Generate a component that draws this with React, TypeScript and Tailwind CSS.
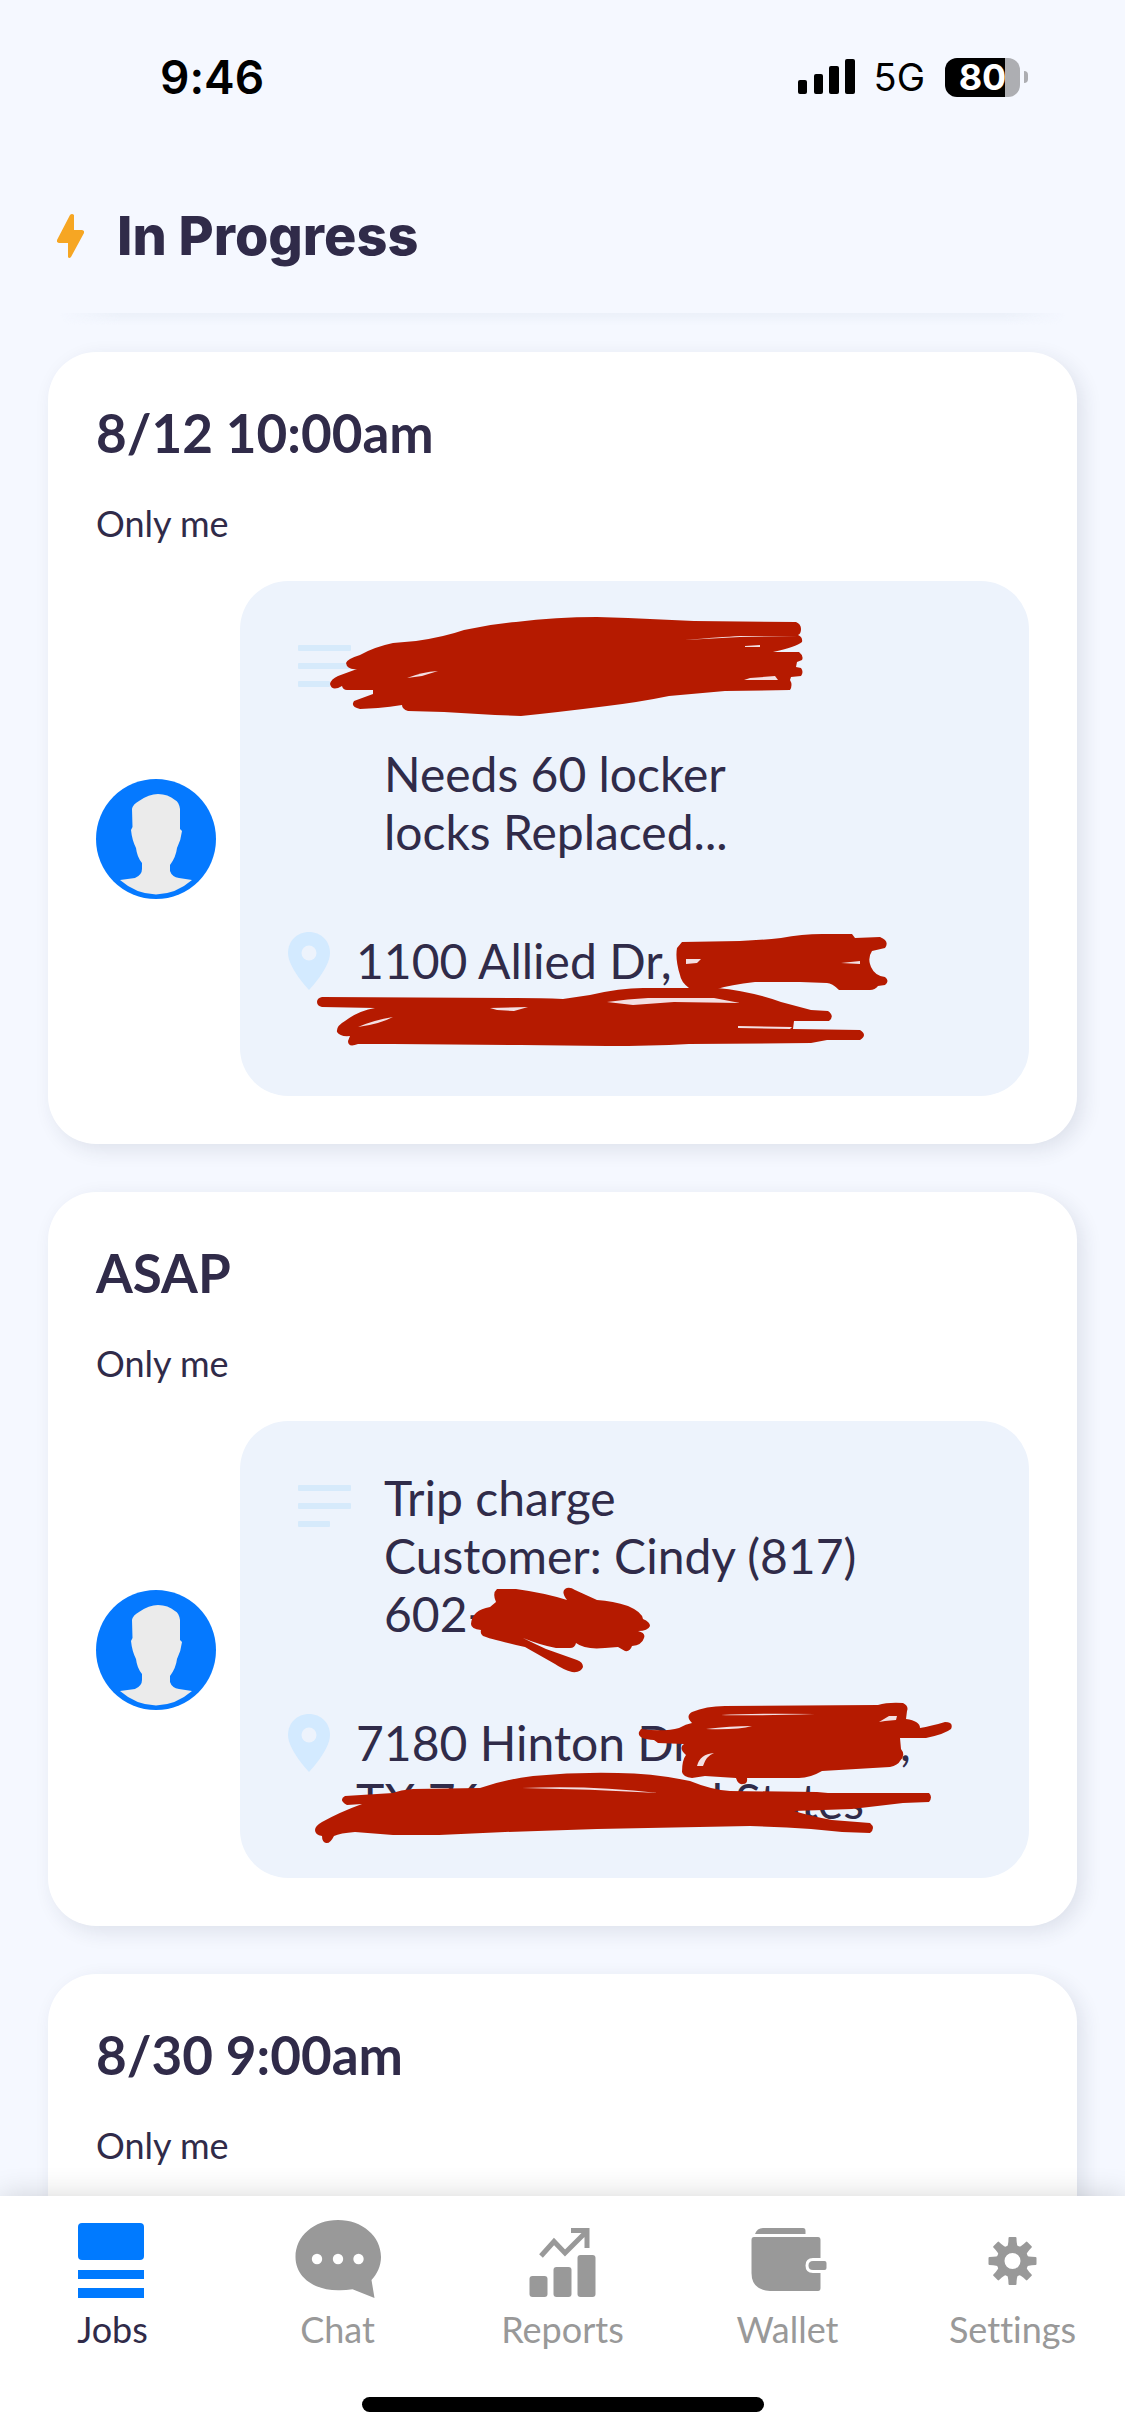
import type { ReactNode } from "react";

type Job = {
  id: string;
  when: string;
  visibility: string;
  notes: string[];
  address: ReactNode[];
  scribbles: string[];
  slits: string[];
};

const jobs: Job[] = [
  {
    id: "locker",
    when: "8/12 10:00am",
    visibility: "Only me",
    notes: ["", "", "Needs 60 locker", "locks Replaced..."],
    address: ["1100 Allied Dr,", ""],
    scribbles: [
      "M153 62L176 60Q204 56 224 49Q250 43 276 41Q316 36 357 36L388 37L454 40L556 41Q561 43 561 48Q561 53 558 54Q563 56 562 61Q556 66 533 71L559 71Q564 75 562 79L557 81L556 86L561 87Q564 91 561 95L551 96L550 99Q553 104 550 109L485 110L429 115Q400 121 367 125Q320 131 281 135L255 134L204 131L168 130Q162 128 162 124Q150 126 138 127L120 128Q110 126 114 120L133 113V109L107 109Q103 109 102 105Q92 111 90 103Q91 98 98 95L117 88Q107 89 106 82Q107 78 120 74Q134 66 153 62Z",
      "M442 361L500 360Q521 359 541 357Q562 353 582 353L612 353L615 357L640 356Q650 360 645 367L632 370Q628 376 630 383L631 386Q635 395 645 396Q650 400 645 404L638 405Q635 409 630 409L599 409Q592 402 587 402L560 401L515 401Q490 404 477 408L449 407Q441 401 440 394Q435 378 437 367Z",
      "M82 416L276 417Q302 417 323 418L350 414Q380 407 403 407L477 407Q510 410 541 421L571 429L588 430Q595 435 589 440L554 440L553 448L620 449Q628 454 620 459L587 459L571 462L449 463Q410 465 367 465L281 464L153 463L118 463Q108 467 108 460L110 455Q100 456 97 451Q96 445 105 440Q118 430 135 427L82 426Q77 425 77 421Q77 417 82 416Z",
    ],
    slits: [
      "M367 421Q388 418 408 417L474 417L500 422L434 421L393 424Z",
      "M446 378L461 378L457 382L446 383Z",
      "M250 427L288 426L274 430L257 429Z",
      "M498 445L552 446L550 448L498 447Z",
      "M118 446Q134 439 153 436Q140 443 118 446Z",
      "M505 65L520 64L520 66L505 66Z",
      "M445 59Q480 56 500 55L558 55L500 56Z",
      "M510 97L535 95L538 99L504 99Z",
      "M167 97Q182 91 198 90L182 95Z",
      "M601 382L620 380L620 383Z",
    ],
  },
  {
    id: "trip",
    when: "ASAP",
    visibility: "Only me",
    notes: ["Trip charge", "Customer: Cindy (817)", "602-"],
    address: [
      <span className="flex w-[555px] justify-between">
        <span>7180 Hinton Dr</span>
        <span>,</span>
      </span>,
      <span className="flex w-[508px] justify-between">
        <span>TX 76</span>
        <span>United States</span>
      </span>,
    ],
    scribbles: [
      "M257 168L276 168Q305 172 327 179Q321 171 325 168Q329 165 335 169L357 179Q373 180 388 185Q402 191 403 198Q410 201 410 205Q408 210 398 210Q406 212 404 217Q402 224 392 225Q390 231 385 230L378 226L365 227Q345 229 336 222Q335 227 330 227L316 227Q300 224 283 217Q295 223 306 228L337 239Q343 241 343 246Q341 252 332 251Q322 248 315 243L285 226Q250 218 243 215Q240 213 241 209Q231 208 231 203Q232 189 250 186L256 181Q252 172 257 168Z",
      "M401 308Q425 311 439 307Q446 303 452 302Q445 295 452 291Q466 285 485 285L638 284Q648 281 663 282Q669 285 667 290L666 298Q680 300 680 307Q691 305 705 301Q714 301 711 308Q705 313 686 317L660 317L661 328Q666 334 660 340Q658 344 650 346L582 350Q570 357 559 357L507 357Q508 363 503 363Q498 364 496 357L465 355L452 357Q443 356 442 351Q442 339 446 334Q438 327 444 323L418 322L414 319Q397 318 399 311Z",
      "M105 375L153 372Q160 369 173 368L240 367Q263 359 293 355Q335 351 378 352Q412 352 450 360Q472 369 490 370L577 371L588 372L689 372Q693 376 689 381L663 382L612 388L554 390Q570 395 592 399L630 402Q636 407 630 412L602 411L571 408Q541 406 510 405L357 408L265 411L199 414L153 414L115 411Q100 412 94 415Q90 423 86 422Q82 421 82 415Q75 414 75 409Q75 405 82 401Q100 391 122 383L107 384Q98 379 105 375Z",
    ],
    slits: [
      "M481 294Q515 292 575 293Q510 295 481 294Z",
      "M466 308Q490 305 512 305Q498 309 466 308Z",
      "M639 301L649 295L657 295L656 299L645 300Z",
      "M457 345Q460 333 474 332Q466 335 463 345Z",
      "M282 367Q350 364 418 372Q350 368 282 367Z",
    ],
  },
  {
    id: "labor",
    when: "8/30 9:00am",
    visibility: "Only me",
    notes: ["", ""],
    address: ["", ""],
    scribbles: [],
    slits: [],
  },
];

const JobsIcon = () => (
  <svg className="h-[78px] w-[90px]" viewBox="0 0 90 78" fill="currentColor" aria-hidden="true">
    <rect x="10" y="3" width="66" height="37" rx="4" />
    <rect x="10" y="50" width="66" height="9" />
    <rect x="10" y="68" width="66" height="10" />
  </svg>
);

const ChatIcon = () => (
  <svg className="h-[78px] w-[90px]" viewBox="0 0 90 78" fill="currentColor" aria-hidden="true">
    <path d="M45 0C69 0 88 16 88 37C88 46 84 54 78.500 60L81.500 78L59.500 69.300Q52 70.500 45 70.300C21 70.300 2.500 57 2.500 37C2.500 16 21 0 45 0Z" />
    <circle cx="24" cy="39" r="5.200" fill="#fff" />
    <circle cx="45" cy="39" r="5.200" fill="#fff" />
    <circle cx="65.500" cy="39" r="5.200" fill="#fff" />
  </svg>
);

const ReportsIcon = () => (
  <svg className="h-[78px] w-[90px]" viewBox="0 0 90 78" fill="currentColor" aria-hidden="true">
    <rect x="11.500" y="56" width="18" height="21" rx="3" />
    <rect x="35.500" y="47" width="18" height="30" rx="3" />
    <rect x="59.500" y="35" width="18" height="42" rx="3" />
    <path d="M23 36L36 21.500L47 33L69 11M53 10.500H69V28" fill="none" stroke="currentColor" strokeWidth="5" />
  </svg>
);

const WalletIcon = () => (
  <svg className="h-[78px] w-[90px]" viewBox="0 0 90 78" fill="currentColor" aria-hidden="true">
    <path d="M12 14Q14 8 20 8H60Q62.500 8 62.500 11V14Z" />
    <path d="M11 17H75Q77.500 17 77.500 20V38H70Q62.500 38 62.500 45.500T70 53H77.500V68Q77.500 71 75 71H27Q8.500 70 8.500 53V20Q8.500 17 11 17Z" />
    <path d="M70 41H81.500Q83.500 41 83.500 43V48Q83.500 50 81.500 50H70Q65.500 50 65.500 45.500T70 41Z" />
  </svg>
);

const teeth = [0, 45, 90, 135, 180, 225, 270, 315];

const SettingsIcon = () => (
  <svg className="h-[78px] w-[90px]" viewBox="0 0 90 78" fill="currentColor" aria-hidden="true">
    <circle cx="44.500" cy="41" r="12" fill="none" stroke="currentColor" strokeWidth="8" />
    {teeth.map(angle => (
      <path key={angle} d="M38 29Q40.500 26 40.500 18Q40.500 17 41.500 17H47.500Q48.500 17 48.500 18Q48.500 26 51 29Z" transform={`rotate(${angle} 44.500 41)`} />
    ))}
  </svg>
);

const tabs = [
  { label: "Jobs", icon: <JobsIcon />, active: true },
  { label: "Chat", icon: <ChatIcon />, active: false },
  { label: "Reports", icon: <ReportsIcon />, active: false },
  { label: "Wallet", icon: <WalletIcon />, active: false },
  { label: "Settings", icon: <SettingsIcon />, active: false },
];

const StatusBar = () => (
  <div className="flex h-[154px] items-center justify-between pr-[97px] pl-40 font-['Inter',sans-serif] text-black">
    <span className="text-[46px] font-semibold">9:46</span>
    <div className="flex items-center">
      <svg className="h-9 w-[58px]" viewBox="0 0 58 36" aria-hidden="true">
        <rect x="0" y="21" width="9" height="14" rx="2" />
        <rect x="16" y="15" width="9" height="20" rx="2" />
        <rect x="31" y="7" width="10" height="28" rx="2" />
        <rect x="47" y="0" width="10" height="35" rx="2" />
      </svg>
      <span className="ml-[18px] text-[38px]">5G</span>
      {/* Battery */}
      <div className="ml-5 flex items-center gap-1">
        <div className="flex h-[39px] w-[75px] items-center justify-center rounded-xl bg-linear-to-r from-black from-80% to-[#adaeb2] to-80%">
          <span className="text-[36px] leading-none font-bold text-white">80</span>
        </div>
        <div className="h-3 w-1 rounded-r-full bg-[#adaeb2]" />
      </div>
    </div>
  </div>
);

const Avatar = () => (
  <svg className="size-[120px] shrink-0" viewBox="0 0 120 120" role="img" aria-label="Technician">
    <circle cx="60" cy="60" r="60" fill="#0579ff" />
    <path
      d="M36 30Q37 25 43 22Q53 15 62 15Q72 15 79 21Q83 23 84 30V50L86 52Q85 61 81 69Q80 78 74 86V92Q76 98 83 99L96 101Q80 115 60 115.500Q40 115 24 101L39 99Q46 96 46 90V84Q41 78 40 69Q36 61 35 51L36.500 48Z"
      fill="#ebebeb"
    />
  </svg>
);

const NotesIcon = () => (
  <svg className="h-[58px] w-[72px] shrink-0" viewBox="0 0 72 58" fill="#d6eafb" aria-hidden="true">
    <rect x="10" y="16" width="53" height="6" rx="1" />
    <rect x="10" y="34" width="53" height="6" rx="1" />
    <rect x="10" y="52" width="32" height="6" rx="1" />
  </svg>
);

const PinIcon = () => (
  <svg className="h-[58px] w-[42px] shrink-0" viewBox="0 0 42 58" aria-hidden="true">
    <path d="M21 0C9 0 0 9 0 21C0 36 21 58 21 58S42 36 42 21C42 9 33 0 21 0Z" fill="#d3eaff" />
    <circle cx="21" cy="21" r="7.500" fill="#edf3fc" />
  </svg>
);

const JobCard = ({ job }: { job: Job }) => (
  <article className="rounded-[48px] bg-white p-12 shadow-[6px_6px_20px_rgba(40,50,70,0.11)]">
    <h2 className="text-[53px] leading-[65px] font-bold">{job.when}</h2>
    <p className="mt-9 text-[36px] leading-[44px]">{job.visibility}</p>

    <div className="mt-9 flex items-center gap-6">
      <Avatar />
      <div className="relative flex flex-1 flex-col gap-[71px] rounded-[48px] bg-[#edf3fc] p-12 text-[48px] leading-[58px]">
        <div className="flex gap-6">
          <NotesIcon />
          <div>
            {job.notes.map((line, i) => (
              <p key={i} className="min-h-[58px]">{line}</p>
            ))}
          </div>
        </div>
        <div className="flex gap-[26px]">
          <PinIcon />
          <div>
            {job.address.map((line, i) => (
              <div key={i} className="min-h-[58px]">{line}</div>
            ))}
          </div>
        </div>

        {/* Marker strokes over private details */}
        <svg className="pointer-events-none absolute top-0 left-0 h-[516px] w-[789px]" viewBox="0 0 789 516" aria-hidden="true">
          {job.scribbles.map(d => <path key={d} d={d} fill="#b51a00" />)}
          {job.slits.map(d => <path key={d} d={d} fill="#f3dfe2" />)}
        </svg>
      </div>
    </div>
  </article>
);

const App = () => (
  <div className="flex h-screen flex-col bg-[#f5f8ff] font-['Lato',sans-serif] text-[#302b49] [font-variant-ligatures:none]">
    <main className="min-h-0 flex-1 overflow-hidden">
      <StatusBar />

      <header className="mt-[50px] flex items-center gap-[33px] px-[57px]">
        <svg className="h-11 w-[27px]" viewBox="0 0 27 44" fill="#f6a623" aria-hidden="true">
          <path d="M13 1Q15-1 17 1V16H25Q28 17 27 19L14 43Q12 45 11 43V29H2Q-1 28 0 26Z" />
        </svg>
        <h1 className="font-['Inter',sans-serif] text-[54px] leading-[64px] font-extrabold">In Progress</h1>
      </header>

      <div className="mx-[60px] mt-[45px] h-3 bg-linear-to-b from-[#ebf0f9] to-transparent [mask-image:linear-gradient(to_right,transparent,black_6%,black_94%,transparent)]" />

      <section className="mt-[27px] flex flex-col gap-12 px-12">
        {jobs.map(job => <JobCard key={job.id} job={job} />)}
      </section>
    </main>

    <nav className="relative bg-white pt-6 pb-6 shadow-[0_0_28px_rgba(0,0,0,0.16)]">
      <div className="grid grid-cols-5">
        {tabs.map(tab => (
          <a
            key={tab.label}
            href={`#${tab.label.toLowerCase()}`}
            className={`flex flex-col items-center gap-[10px] ${tab.active ? "text-[#007aff]" : "text-[#999999]"}`}
          >
            {tab.icon}
            <span className={`text-[36px] leading-[43px] ${tab.active ? "text-[#302b49]" : ""}`}>{tab.label}</span>
          </a>
        ))}
      </div>
      <div className="mx-auto mt-[46px] h-[15px] w-[402px] rounded-full bg-black" />
    </nav>
  </div>
);

export default App;
